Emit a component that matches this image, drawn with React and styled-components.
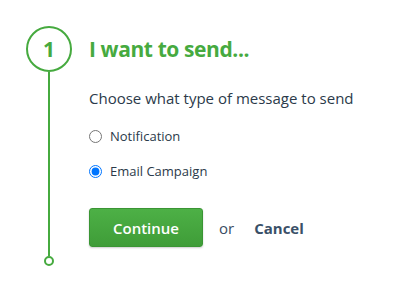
import React, { useState } from 'react';
import styled, { createGlobalStyle } from 'styled-components';

const GlobalStyle = createGlobalStyle`
  html, body { margin: 0; padding: 0; background: #ffffff; }
  body { font-family: "Open Sans", "Liberation Sans", sans-serif; }
`;

const options = [
  { id: 'notification', label: 'Notification' },
  { id: 'email', label: 'Email Campaign' },
];

export default function App() {
  const [choice, setChoice] = useState('email');

  return (
    <>
      <GlobalStyle />
      <Page>
        <Step>
          <Rail>
            <Number>1</Number>
            <Line />
            <End />
          </Rail>
          <Body>
            <Title>I want to send...</Title>
            <Prompt>Choose what type of message to send</Prompt>
            <Options>
              {options.map((o) => (
                <Option key={o.id}>
                  <input
                    type="radio"
                    name="type"
                    checked={choice === o.id}
                    onChange={() => setChoice(o.id)}
                  />
                  <span>{o.label}</span>
                </Option>
              ))}
            </Options>
            <Actions>
              <Button>Continue</Button>
              <Or>or</Or>
              <Cancel href="#">Cancel</Cancel>
            </Actions>
          </Body>
        </Step>
      </Page>
    </>
  );
}

const Page = styled.div`
  width: 402px;
  height: 299px;
  padding: 26px 0 0 26px;
  box-sizing: border-box;
`;

const Step = styled.div`
  display: flex;
  gap: 17px;
`;

const Rail = styled.div`
  display: flex;
  flex-direction: column;
  align-items: center;
  width: 46px;
`;

const Number = styled.div`
  width: 46px;
  height: 46px;
  box-sizing: border-box;
  border: 2px solid #46aa3f;
  border-radius: 50%;
  display: flex;
  align-items: center;
  justify-content: center;
  color: #46aa3f;
  font-size: 21px;
  font-weight: 700;
`;

const Line = styled.div`
  width: 2px;
  height: 184px;
  background: #46aa3f;
`;

const End = styled.div`
  width: 10px;
  height: 10px;
  box-sizing: border-box;
  border: 2px solid #46aa3f;
  border-radius: 50%;
`;

const Body = styled.div`
  display: flex;
  flex-direction: column;
  padding-top: 9px;
`;

const Title = styled.h2`
  margin: 0;
  color: #46aa3f;
  font-size: 21px;
  font-weight: 700;
  line-height: 28px;
  letter-spacing: -0.4px;
`;

const Prompt = styled.p`
  margin: 25px 0 0;
  color: #2b3a4a;
  font-size: 15px;
  line-height: 20px;
`;

const Options = styled.div`
  display: flex;
  flex-direction: column;
  gap: 15px;
  margin-top: 18px;
`;

const Option = styled.label`
  display: flex;
  align-items: center;
  gap: 8px;
  color: #2b3a4a;
  font-size: 13px;
  line-height: 20px;

  input {
    margin: 0;
    width: 13px;
    height: 13px;
  }
`;

const Actions = styled.div`
  display: flex;
  align-items: center;
  margin-top: 27px;
`;

const Button = styled.button`
  width: 114px;
  height: 39px;
  border: 1px solid #3a9534;
  border-radius: 3px;
  background: linear-gradient(#4db046, #3f9d38);
  box-shadow: 0 1px 2px rgba(0, 0, 0, 0.2);
  color: #ffffff;
  font-family: inherit;
  font-size: 15px;
  font-weight: 600;
  cursor: pointer;
`;

const Or = styled.span`
  margin-left: 16px;
  color: #3a4d63;
  font-size: 15px;
`;

const Cancel = styled.a`
  margin-left: 20px;
  color: #3a5068;
  font-size: 15px;
  font-weight: 700;
  text-decoration: none;
`;
